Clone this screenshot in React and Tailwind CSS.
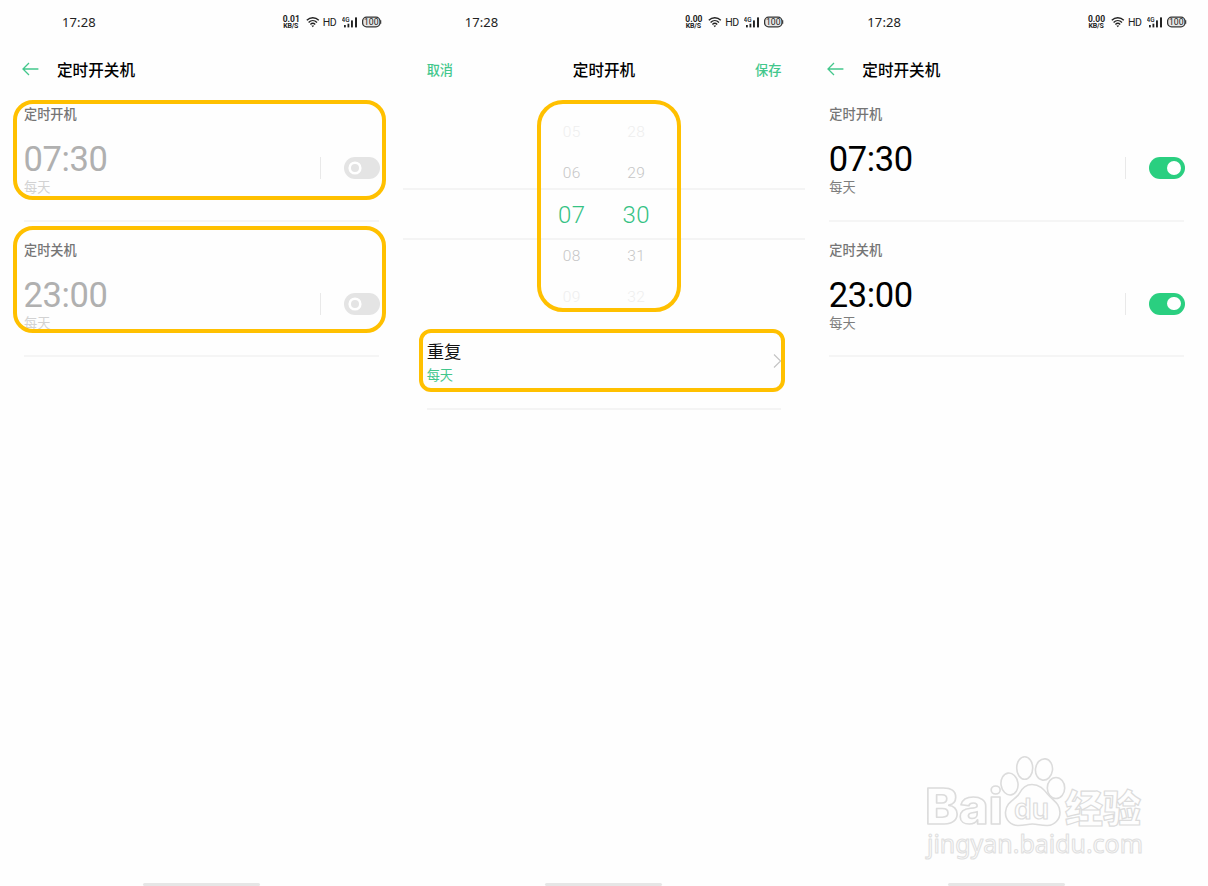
const alarms = [
  { label: "定时开机", time: "07:30", repeat: "每天" },
  { label: "定时关机", time: "23:00", repeat: "每天" },
];

const pickerRows = [
  { hour: "05", minute: "28", style: "text-[15.5px] text-[#eeeeee]" },
  { hour: "06", minute: "29", style: "text-[15.5px] text-[#c6c6c6]" },
  { hour: "07", minute: "30", style: "text-[24px] text-[#35c284]" },
  { hour: "08", minute: "31", style: "text-[15.5px] text-[#c6c6c6]" },
  { hour: "09", minute: "32", style: "text-[15.5px] text-[#eeeeee]" },
];

const WifiIcon = () => (
  <svg width="14" height="12" viewBox="0 0 14 12" fill="none" stroke="#222" strokeWidth="1.4">
    <path d="M0.8 4.3C4.3 0.8 9.3 0.8 12.8 4.3" />
    <path d="M2.6 6.4c2.5-2.4 5.9-2.4 8.4 0" />
    <path d="M4.4 8.4c1.4-1.3 3.4-1.3 4.8 0" />
    <path d="M5.4 9.6h2.8L6.8 11.3z" fill="#222" stroke="none" />
  </svg>
);

const SignalIcon = () => (
  <svg width="16" height="12" viewBox="0 0 16 12" fill="#222">
    <text x="-0.5" y="6" fontSize="7" fontWeight="500" textLength="8" lengthAdjust="spacingAndGlyphs">
      4G
    </text>
    <rect x="2" y="9" width="1.8" height="2.4" />
    <rect x="5.5" y="7.7" width="1.8" height="3.7" />
    <rect x="9" y="4.4" width="1.9" height="7" />
    <rect x="13" y="1.4" width="2" height="10" />
  </svg>
);

const BatteryIcon = () => (
  <svg width="20" height="12" viewBox="0 0 20 12">
    <rect x="0.6" y="1.2" width="17.4" height="9.6" rx="4" fill="#e6e6e6" stroke="#333" strokeWidth="1.3" />
    <path d="M18.7 4.2v3.6" stroke="#333" strokeWidth="1.1" />
    <text x="2" y="9.4" fontSize="9.5" fill="#222" textLength="14.6" lengthAdjust="spacingAndGlyphs">
      100
    </text>
  </svg>
);

const StatusBar = ({ speed }) => (
  <div className="flex h-11 items-center pl-[62px] pr-[21px] text-[#222]">
    <span className="font-['Noto_Sans'] text-[13px] leading-none tracking-[0.1px]">17:28</span>
    <div className="ml-auto flex items-center font-['Roboto']">
      <div className="mr-[7px] w-4 text-center text-[8.5px] font-bold leading-[7px]">
        <div>{speed}</div>
        <div className="text-[7px] leading-[6px] tracking-[-0.2px]">KB/S</div>
      </div>
      <WifiIcon />
      <span className="ml-[3px] mr-[5px] w-[14px] pt-[2px] text-[10.5px] leading-none tracking-[-0.5px]">HD</span>
      <SignalIcon />
      <span className="w-[4px]" />
      <BatteryIcon />
    </div>
  </div>
);

const BackArrow = () => (
  <svg width="17" height="14" viewBox="0 0 17 14" fill="none" stroke="#43c78c" strokeWidth="1.3">
    <path d="M16.4 7H1M7 1L1 7l6 6" />
  </svg>
);

const Switch = ({ on }) => (
  <div
    className={`flex h-[22px] w-9 items-center rounded-full ${
      on ? "justify-end bg-[#2acf80] pr-[4px]" : "bg-[#e4e4e4] pl-[4px]"
    }`}>
    {on ? (
      <span className="size-[13.5px] rounded-full bg-white" />
    ) : (
      <svg width="14" height="14" viewBox="0 0 14 14" fill="none" stroke="#fff" strokeWidth="2.6">
        <circle cx="7" cy="7" r="5.3" />
      </svg>
    )}
  </div>
);

// Yellow callout drawn over the content
const Highlight = ({ className }) => (
  <div className={`pointer-events-none absolute border-4 border-[#ffc000] ${className}`} />
);

const AlarmRow = ({ alarm, on, children }) => (
  <section className="relative h-[135.6px] px-6">
    <div className="flex h-full flex-col border-b-2 border-[#f5f5f5] pt-[19.4px]">
      <div className="text-[13.2px] font-medium leading-5 text-[#757575]">{alarm.label}</div>
      <div className="mt-3 flex">
        <div>
          <div
            className={`-ml-[0.5px] font-['Roboto'] text-[34.5px] leading-[45px] tracking-[-0.4px] ${
              on ? "text-black" : "text-[#b0b0b0]"
            }`}>
            {alarm.time}
          </div>
          <div
            className={`-mt-1 text-[13.2px] leading-5 ${
              on ? "text-[#7d7d7d]" : "text-[#d2d2d2]"
            }`}>
            {alarm.repeat}
          </div>
        </div>
        <div className="-mr-px ml-auto mt-[19.6px] flex h-[22px] items-center gap-[23px]">
          <span className="h-[22px] w-px bg-[#e9e9e9]" />
          <Switch on={on} />
        </div>
      </div>
    </div>
    {children}
  </section>
);

const HomeBar = () => (
  <div className="mx-auto mt-auto h-[3px] w-[117px] rounded-full bg-[#e6e6e6]" />
);

const AlarmScreen = ({ speed, on, highlights = [] }) => (
  <div className="flex h-full flex-col">
    <StatusBar speed={speed} />
    <header className="mt-2 flex h-[34px] items-center pl-[22px]">
      <BackArrow />
      <h1 className="ml-[18px] pt-[5px] text-[15.6px] font-medium leading-none text-black">定时开关机</h1>
    </header>
    {alarms.map((alarm, index) => (
      <AlarmRow key={alarm.label} alarm={alarm} on={on}>
        {highlights[index] && <Highlight className={highlights[index]} />}
      </AlarmRow>
    ))}
    <HomeBar />
  </div>
);

const EditScreen = () => (
  <div className="flex h-full flex-col">
    <StatusBar speed="0.00" />
    <header className="mt-2 grid h-[34px] grid-cols-3 items-center px-6 pt-[3px] text-[13.2px] font-medium leading-none text-[#43c78c]">
      <span>取消</span>
      <h1 className="pt-[2px] text-center text-[15.6px] text-black">定时开机</h1>
      <span className="text-right">保存</span>
    </header>

    <div className="relative mt-[26px] h-[206px]">
      <div className="absolute inset-x-0 top-[76px] h-[52px] border-y-2 border-[#f4f4f4]" />
      {pickerRows.map((row) => (
        <div
          key={row.hour}
          className={`relative mx-auto grid h-[41.2px] w-[129px] grid-cols-2 items-center text-center font-['Roboto'] font-light tracking-[0.3px] ${row.style}`}>
          <span>{row.hour}</span>
          <span>{row.minute}</span>
        </div>
      ))}
      <Highlight className="-top-3 left-[134.5px] h-[212px] w-36 rounded-[26px]" />
    </div>

    <div className="relative mt-[17px] px-6">
      <div className="flex h-[75px] border-b-2 border-[#f4f4f4] pt-1">
        <div>
          <div className="text-[17.4px] leading-[26px] text-[#111]">重复</div>
          <div className="text-[13.2px] leading-[22px] text-[#43c78c]">每天</div>
        </div>
        <svg className="-mr-px ml-auto mt-[15px]" width="9" height="14" viewBox="0 0 9 14" fill="none" stroke="#c4c4c4" strokeWidth="1.2">
          <path d="M1 0.5L7.6 7 1 13.5" />
        </svg>
      </div>
      <Highlight className="-top-[6px] left-4 h-[63px] w-[366px] rounded-[12px]" />
    </div>
    <HomeBar />
  </div>
);

const Watermark = () => (
  <svg
    className="pointer-events-none absolute left-[915px] top-[745px]"
    width="240"
    height="125"
    viewBox="0 0 240 125"
    fill="#fefefe"
    stroke="#dcdcdc"
    strokeWidth="1.6"
    strokeLinejoin="round">
    <text x="10" y="79" fontFamily="Inter" fontWeight="800" fontSize="49" textLength="78" lengthAdjust="spacingAndGlyphs">
      Bai
    </text>
    <ellipse cx="94.5" cy="39" rx="8.5" ry="11" transform="rotate(-8 94.5 39)" />
    <ellipse cx="109.7" cy="23" rx="8" ry="11.2" />
    <ellipse cx="129" cy="24.5" rx="8.5" ry="10.7" transform="rotate(8 129 24.5)" />
    <ellipse cx="141" cy="43" rx="8.7" ry="10.5" />
    <path d="M117 39.5c-6 0-10 3.5-13 9.5-3 5-13 8-13.5 18-.5 8 5.5 13.5 13 13.500 6 0 9-1.500 14-1.500 5 0 9 1.800 15 1.500 7-.3 12.500-6 12.500-13 0-9-7-12-12.500-18.500-4-5-8-9.500-15.500-9.500z" />
    <text x="99" y="74" fontFamily="Inter" fontWeight="600" fontSize="29" textLength="35" lengthAdjust="spacingAndGlyphs" strokeWidth="1.2">
      du
    </text>
    <text x="150" y="77" fontFamily="Noto Sans CJK SC" fontWeight="900" fontSize="38" textLength="76" lengthAdjust="spacingAndGlyphs" strokeWidth="1.2">
      经验
    </text>
    <text x="12" y="108" fontFamily="Noto Sans" fontSize="25" textLength="216" lengthAdjust="spacingAndGlyphs" stroke="#e0e0e0" strokeWidth="1.1">
      jingyan.baidu.com
    </text>
  </svg>
);

export default function App() {
  return (
    <main className="relative grid h-[886px] w-[1208px] grid-cols-3 overflow-hidden bg-[#fefefe] font-['Roboto','Noto_Sans_CJK_SC',sans-serif]">
      <AlarmScreen
        speed="0.01"
        on={false}
        highlights={[
          "left-[13px] top-[14px] h-[100px] w-[373px] rounded-[20px]",
          "left-[13px] top-[4.4px] h-[107px] w-[373px] rounded-[20px]",
        ]}
      />
      <EditScreen />
      <AlarmScreen speed="0.00" on />
      <Watermark />
    </main>
  );
}
